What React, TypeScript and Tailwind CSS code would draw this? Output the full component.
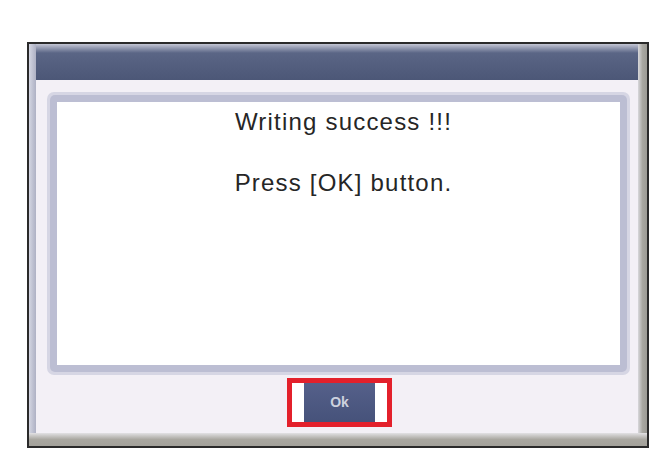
import React from "react";

export default function App() {
  return (
    <div className="w-[666px] h-[466px] bg-white pt-[42px] pl-[27px]" style={{ fontFamily: '"Liberation Sans", Arial, sans-serif' }}>
      <div className="w-[622px] h-[406px] border-2 border-[#2a2a2a] flex flex-col bg-[#a9a8a2]">
        <div className="flex flex-1 min-h-0">
          {/* left strip */}
          <div className="w-[7px] bg-linear-to-r from-[#d4d6e2] to-[#aeb1c4]" />
          <div className="flex-1 flex flex-col">
            {/* title bar */}
            <div className="h-[36px] bg-linear-to-b from-[#c4c6d4] from-0% via-[#5a6585] via-25% to-[#4c5777]" />
            {/* body */}
            <div className="flex-1 bg-[#f3f0f6] pl-[11px] pr-[8px] pt-[12px] flex flex-col">
              <div className="w-[583px] h-[283px] rounded-[7px] bg-[#d6d6e4] p-[3px]">
                <div className="w-full h-full rounded-[5px] bg-[#bcbed3] p-[7px]">
                  <div className="w-full h-full bg-white flex flex-col items-center pt-[6px] pl-[10px] text-[24px] leading-[28px] text-[#262626] tracking-[1.2px]">
                    <div>Writing success !!!</div>
                    <div className="mt-[33px]">Press [OK] button.</div>
                  </div>
                </div>
              </div>
              <div className="flex justify-center pt-[3px] pl-[2px]">
                <div className="w-[105px] h-[49px] border-[5px] border-[#e3202b] bg-white px-[12px] flex">
                  <div className="flex-1 bg-linear-to-b from-[#55608a] to-[#46527a] flex items-center justify-center text-[14px] font-bold text-[#cdd1de]">
                    Ok
                  </div>
                </div>
              </div>
            </div>
          </div>
          {/* right strip */}
          <div className="w-[9px] bg-linear-to-r from-[#d8d8dc] via-[#a8a7a1] to-[#9c9b95]" />
        </div>
        {/* bottom strip */}
        <div className="h-[13px] bg-linear-to-b from-[#e2e1e4] via-[#a9a7a0] to-[#a3a19a]" />
      </div>
    </div>
  );
}
